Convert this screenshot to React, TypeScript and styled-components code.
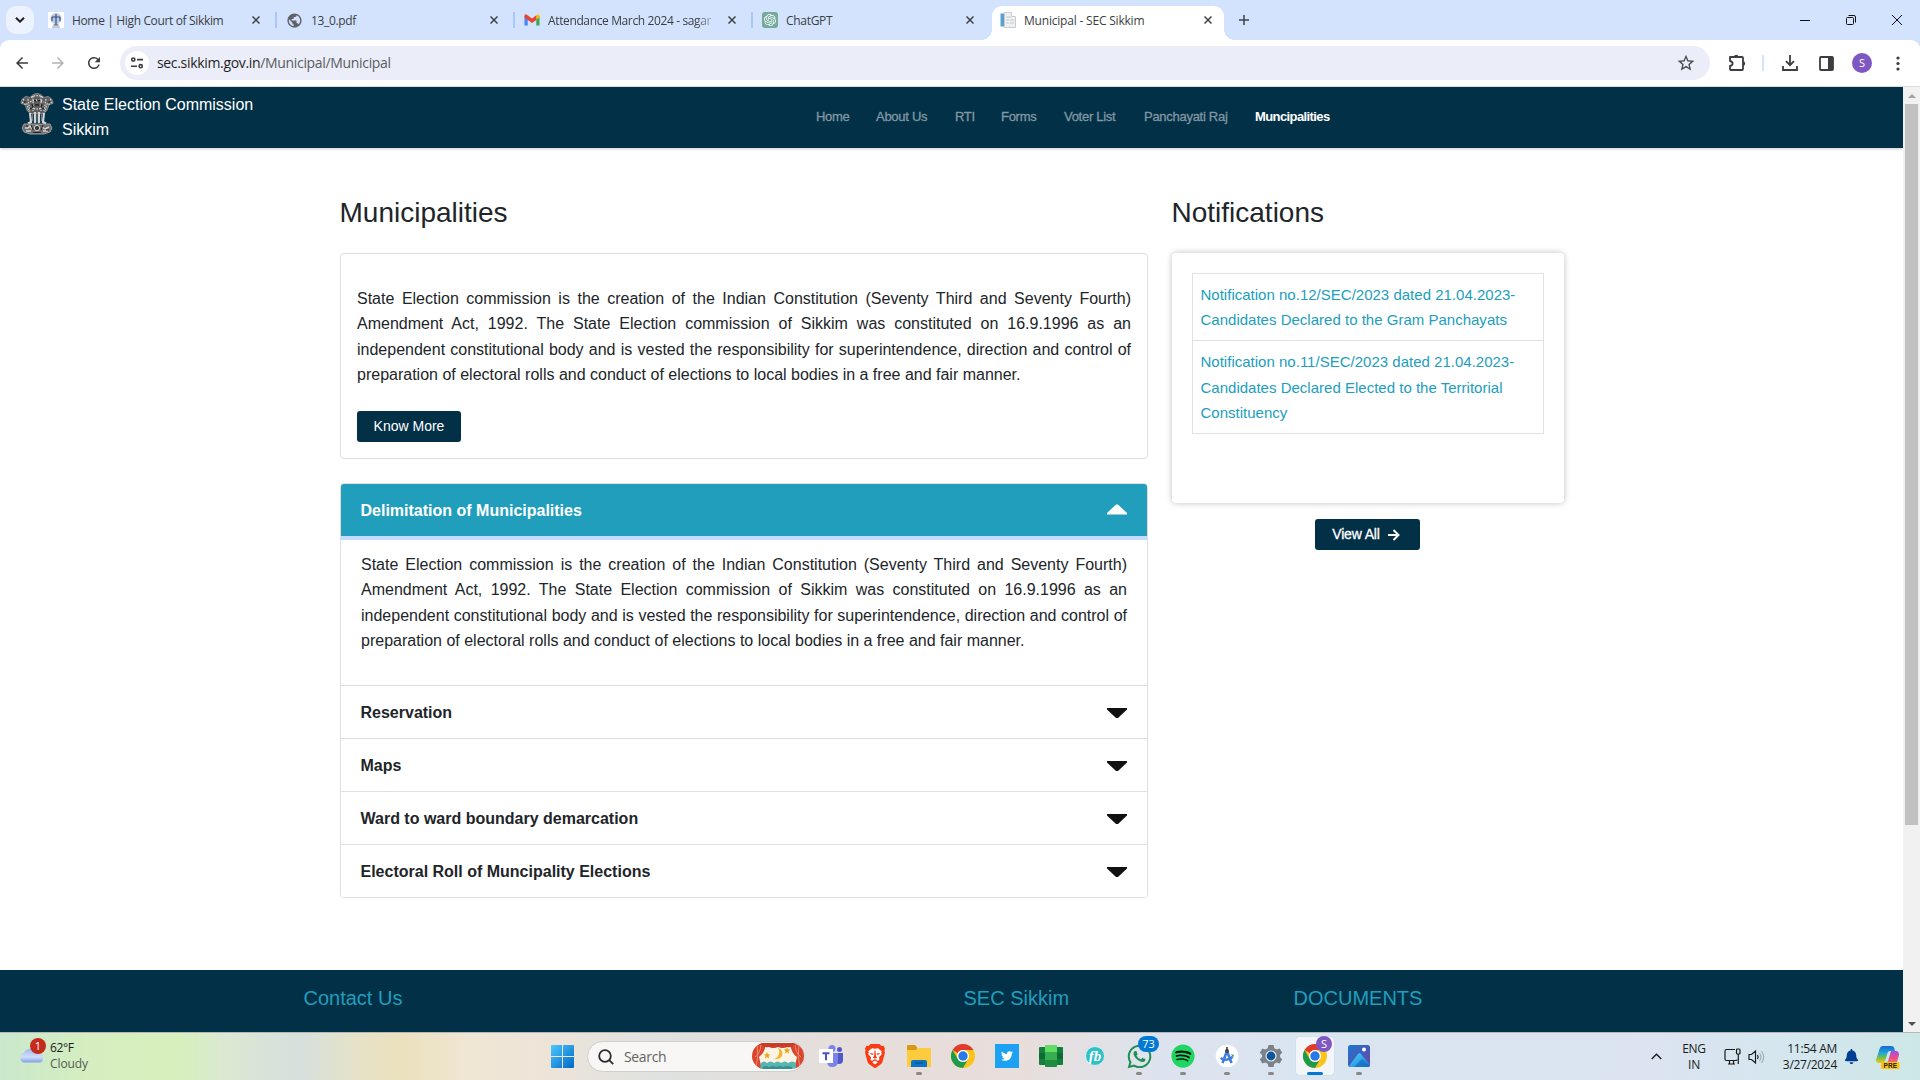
import React from "react";
import styled, { createGlobalStyle } from "styled-components";
import { FaTwitter, FaWhatsapp, FaSpotify, FaBell } from "react-icons/fa";
import { SiOpenai } from "react-icons/si";
import { MdStarOutline, MdArrowBack, MdArrowForward, MdRefresh, MdPublic } from "react-icons/md";

const ui = `"Open Sans", "Noto Sans", sans-serif`;
const arial = `"Liberation Sans", Arial, sans-serif`;
const navy = "#023047";
const teal = "#219ebc";

const Global = createGlobalStyle`
  * { box-sizing: border-box; }
  html, body { margin: 0; padding: 0; }
  body { width: 1920px; height: 1080px; overflow: hidden; background: #fff; font-family: ${arial}; }
  svg { display: block; flex: none; }
  p, h1, h2, h3, h4 { margin: 0; font-weight: 400; }
`;

const Screen = styled.div`
  width: 1920px;
  height: 1080px;
  display: flex;
  flex-direction: column;
`;

/* ---------- browser chrome ---------- */
const TabStrip = styled.div`
  height: 40px;
  background: #d3e3fd;
  display: flex;
  padding-left: 6px;
  font-family: ${ui};
`;
const TabSearch = styled.div`
  width: 28px;
  height: 28px;
  margin: 6px 6px 0 0;
  border-radius: 10px;
  background: #ecf3fe;
  display: grid;
  place-items: center;
`;
const Tab = styled.div<{ $active?: boolean }>`
  position: relative;
  width: ${(p) => (p.$active ? 232 : 238)}px;
  height: ${(p) => (p.$active ? 34 : 28)}px;
  margin-top: 6px;
  padding: ${(p) => (p.$active ? "6px 8px 0" : "6px 14px 0 8px")};
  display: flex;
  align-items: flex-start;
  gap: 8px;
  background: ${(p) => (p.$active ? "#fff" : "transparent")};
  border-radius: 10px 10px 0 0;
  ${(p) =>
    p.$active &&
    `&::before, &::after {
      content: ""; position: absolute; bottom: 0; width: 10px; height: 10px;
    }
    &::before { left: -10px; background: radial-gradient(circle at 0 0, transparent 9.5px, #fff 10px); }
    &::after { right: -10px; background: radial-gradient(circle at 100% 0, transparent 9.5px, #fff 10px); }`}
`;
const TabLine = styled.div`
  position: absolute;
  right: 1px;
  top: 6px;
  width: 2px;
  height: 16px;
  background: #a8c7fa;
`;
const TabTitle = styled.div<{ $ls?: number; $fade?: boolean }>`
  flex: 1;
  height: 18px;
  line-height: 18px;
  font-size: 12px;
  color: #3b3e43;
  letter-spacing: ${(p) => p.$ls ?? -0.35}px;
  white-space: nowrap;
  ${(p) => p.$fade && "mask-image: linear-gradient(90deg, #000 88%, rgba(0,0,0,.1));"}
`;
const TabClose = styled.div`
  width: 16px;
  height: 16px;
  display: grid;
  place-items: center;
`;
const NewTab = styled.div`
  width: 40px;
  height: 40px;
  display: grid;
  place-items: center;
`;
const WinControls = styled.div`
  margin-left: auto;
  display: flex;
`;
const WinButton = styled.div`
  width: 46px;
  height: 40px;
  display: grid;
  place-items: center;
`;
const ToolbarBack = styled.div`
  background: #d3e3fd;
`;
const Toolbar = styled.div`
  height: 47px;
  border-radius: 9px 9px 0 0;
  border-bottom: 1px solid #dadce0;
  background: #fff;
  display: flex;
  align-items: center;
  padding: 0 4px;
  color: #47484a;
`;
const ToolButton = styled.div<{ $dim?: boolean }>`
  width: 36px;
  height: 36px;
  display: grid;
  place-items: center;
  color: ${(p) => (p.$dim ? "#b1b2b4" : "#3c3d40")};
`;
const Omnibox = styled.div`
  width: 1590px;
  height: 34px;
  margin-left: 8px;
  margin-right: 9px;
  border-radius: 17px;
  background: #ebeef8;
  display: flex;
  align-items: center;
  padding: 0 12px 0 5px;
`;
const SiteInfo = styled.div`
  width: 24px;
  height: 24px;
  border-radius: 50%;
  background: #fff;
  display: grid;
  place-items: center;
`;
const Url = styled.div`
  flex: 1;
  margin-left: 8px;
  font: 14px/20px ${ui};
  letter-spacing: -0.33px;
  color: #5a5c61;
  b { font-weight: 400; color: #1f1f1f; }
`;
const ToolLine = styled.div`
  width: 2px;
  height: 16px;
  margin: 0 8px 0 7px;
  background: #d3e3fd;
`;
const Avatar = styled.div`
  width: 20px;
  height: 20px;
  border-radius: 50%;
  background: #7e57c2;
  color: #fff;
  font: 11px/20px ${ui};
  text-align: center;
`;

/* ---------- page ---------- */
const Viewport = styled.div`
  height: 945px;
  display: flex;
`;
const Page = styled.div`
  width: 1903px;
  height: 945px;
  background: #fff;
  overflow: hidden;
  display: flex;
  flex-direction: column;
`;
const Nav = styled.header`
  height: 61px;
  flex: none;
  background: ${navy};
  box-shadow: 0 1px 3px rgba(0, 0, 0, 0.2);
  display: flex;
  padding: 6px 0 0 20px;
`;
const Brand = styled.div`
  width: 754px;
  margin-left: 8px;
  margin-top: -1px;
  color: #fff;
  font-size: 16px;
  line-height: 25px;
`;
const NavLinks = styled.nav`
  display: flex;
  gap: 26px;
  padding-top: 15px;
`;
const NavLink = styled.a<{ $active?: boolean; $w: number }>`
  width: ${(p) => p.$w}px;
  white-space: nowrap;
  font-size: 13px;
  line-height: 18px;
  letter-spacing: ${(p) => (p.$active ? -0.6 : -0.28)}px;
  font-weight: ${(p) => (p.$active ? 700 : 400)};
  color: ${(p) => (p.$active ? "#fff" : "#8197a2")};
  -webkit-text-stroke: ${(p) => (p.$active ? "0" : "0.3px #8197a2")};
`;
const Content = styled.main`
  flex: 1;
  display: flex;
  gap: 24px;
  padding: 47px 0 0 340px;
`;
const Left = styled.section`
  width: 808px;
`;
const Right = styled.aside`
  width: 392px;
  display: flex;
  flex-direction: column;
`;
const Heading = styled.h3`
  height: 58px;
  padding-top: 1px;
  font-size: 28px;
  line-height: 34px;
  text-indent: -0.5px;
  color: #212529;
`;
const Intro = styled.div`
  height: 206px;
  border: 1px solid #dfdfdf;
  border-radius: 4px;
  padding: 32px 16px 0;
`;
const Para = styled.p`
  font-size: 16px;
  line-height: 25.4px;
  color: #212529;
  text-align: justify;
`;
const Button = styled.button<{ $w: number; $bold?: boolean }>`
  width: ${(p) => p.$w}px;
  height: 31px;
  border: 0;
  border-radius: 3px;
  background: ${navy};
  color: #fff;
  font: 14px/21px ${arial};
  letter-spacing: ${(p) => (p.$bold ? -0.15 : 0)}px;
  -webkit-text-stroke: ${(p) => (p.$bold ? "0.3px #fff" : "0")};
  display: flex;
  align-items: center;
  justify-content: center;
  gap: 8px;
  padding: ${(p) => (p.$bold ? "0 3px 0 0" : "0")};
`;
const IntroAction = styled.div`
  padding-top: 23px;
`;
const Accordion = styled.div`
  margin-top: 24px;
  border: 1px solid #dfdfdf;
  border-radius: 4px;
  overflow: hidden;
`;
const AccHead = styled.div<{ $open?: boolean }>`
  height: ${(p) => (p.$open ? 52 : 53)}px;
  border-top: ${(p) => (p.$open ? "0" : "1px solid #dfdfdf")};
  background: ${(p) => (p.$open ? teal : "#fff")};
  color: ${(p) => (p.$open ? "#fff" : "#212529")};
  padding: 0 20px 0 19.5px;
  display: flex;
  align-items: center;
  justify-content: space-between;
  font-size: 16px;
  font-weight: 700;
  span { padding-top: 2px; }
`;
const AccBody = styled.div`
  height: 149px;
  border-top: 4px solid #c2dbfe;
  padding: 12px 20px 0;
`;
const NoticeCard = styled.div`
  height: 250px;
  border-radius: 4px;
  background: #fff;
  box-shadow: 0 0 6px rgba(0, 0, 0, 0.25);
  padding: 20px;
`;
const NoticeList = styled.div`
  border: 1px solid #dee2e6;
`;
const Notice = styled.a`
  display: block;
  padding: 8px 7.5px;
  font-size: 15px;
  line-height: 25.2px;
  letter-spacing: 0.01px;
  color: ${teal};
  & + & { border-top: 1px solid #dee2e6; }
`;
const ViewAll = styled.div`
  padding: 16px 0 0 143px;
`;
const Footer = styled.footer`
  height: 62px;
  flex: none;
  background: ${navy};
  color: ${teal};
  display: grid;
  grid-template-columns: 660px 330px 330px;
  padding: 15px 0 0 303.5px;
  font-size: 20px;
  line-height: 26px;
`;
const Scroll = styled.div`
  width: 17px;
  background: #f1f1f1;
  display: flex;
  flex-direction: column;
  align-items: center;
`;
const ScrollArrow = styled.div`
  height: 17px;
  width: 17px;
  display: grid;
  place-items: center;
`;
const Thumb = styled.div`
  width: 13px;
  height: 721px;
  margin-bottom: auto;
  background: #c1c1c1;
`;

/* ---------- taskbar ---------- */
const Taskbar = styled.div`
  height: 48px;
  border-top: 1px solid #b4b8b8;
  display: flex;
  font-family: ${ui};
  background: linear-gradient(90deg, #c9e8cc 0, #d6eebf 90px, #d6efbc 180px, #dbe8d2 225px, #d5e0dd 300px, #e3e2cb 345px, #ebe1bd 400px, #f0e6d4 470px, #eee4d8 540px, #dfe2e0 660px, #e2e0de 740px, #e6dedb 860px, #e8dedb 1020px, #dde3ee 1160px, #dae5f2 1300px, #dbe4f0 1660px, #d5e6ef 1780px, #cde7e6 1920px);
`;
const Weather = styled.div`
  width: 540px;
  padding: 6px 0 0 17px;
  display: flex;
  gap: 6px;
`;
const WeatherText = styled.div`
  padding-top: 1px;
  font-size: 12px;
  line-height: 16px;
  letter-spacing: -0.4px;
  color: #1b1b1b;
  span { color: #565a55; letter-spacing: -0.1px; }
`;
const TaskApp = styled.div<{ $on?: boolean }>`
  position: relative;
  width: 38px;
  height: 38px;
  margin: 4px 3px 0;
  border-radius: 4px;
  background: ${(p) => (p.$on ? "rgba(255,255,255,.65)" : "transparent")};
  box-shadow: ${(p) => (p.$on ? "0 0 1px rgba(0,0,0,.2)" : "none")};
  display: grid;
  place-items: center;
`;
const Dot = styled.i<{ $on?: boolean }>`
  position: absolute;
  bottom: 0;
  left: ${(p) => (p.$on ? 11 : 16)}px;
  width: ${(p) => (p.$on ? 16 : 6)}px;
  height: 3px;
  border-radius: 2px;
  background: ${(p) => (p.$on ? "#0078d4" : "#8a8785")};
`;
const Badge = styled.span<{ $c: string; $w: number; $x: number; $y: number; $h: number }>`
  position: absolute;
  left: ${(p) => p.$x}px;
  top: ${(p) => p.$y}px;
  width: ${(p) => p.$w}px;
  height: ${(p) => p.$h}px;
  border-radius: 9px;
  background: ${(p) => p.$c};
  color: #fff;
  font: 11px/${(p) => p.$h}px ${ui};
  text-align: center;
`;
const WeatherIcon = styled.div`
  position: relative;
  width: 27px;
  padding: 8px 0 0 2px;
`;
const Search = styled.div`
  width: 218px;
  height: 31px;
  margin: 8px 4px 0 3px;
  border-radius: 16px;
  border: 1px solid #d0cfcb;
  background: #f8f7f5;
  display: flex;
  align-items: center;
  padding: 0 0 0 10px;
`;
const SearchText = styled.div`
  flex: 1;
  margin-left: 10px;
  font-size: 14px;
  letter-spacing: -0.35px;
  color: #65635f;
`;
const Tray = styled.div`
  margin-left: auto;
  width: 277px;
  height: 47px;
  display: flex;
  align-items: center;
  color: #1b1b1b;
  font-size: 12px;
  line-height: 16px;
`;
const Lang = styled.div`
  width: 32px;
  margin-left: 9px;
  text-align: center;
  letter-spacing: -0.3px;
`;
const Clock = styled.div`
  width: 64px;
  white-space: nowrap;
  letter-spacing: -0.3px;
  display: flex;
  flex-direction: column;
  align-items: flex-end;
`;
const Gap = styled.div<{ $w: number }>`
  width: ${(p) => p.$w}px;
  flex: none;
`;

const Cross = () => (
  <svg width="8" height="8" viewBox="0 0 8 8" stroke="#3f4145" strokeWidth="1.5"><path d="M.5.5l7 7M7.5.5l-7 7" /></svg>
);

const Emblem = () => (
  <svg width="34" height="42" viewBox="0 0 34 42" fill="none" stroke="#d4d4d4">
    <path fill="#5e5e5e" stroke="#999" strokeWidth=".8" d="M12 2.500q5-4 10 0l2 2 4-1q5 2 5 7l-4 1-2 6-4 3H11l-4-3-2-6-4-1Q1 5.500 6 3.500l4 1z" />
    <path strokeWidth="1.300" strokeDasharray="1.600 1.200" d="M11 4.500q6-4 12 0M10 9q7-4 14 0M11 14q6 4 12 0M3 6l4 5 2 8M31 6l-4 5-2 8M13 3v15M21 3v15M8 6l2 12M26 6l-2 12M2 9l4 3M32 9l-4 3" />
    <path stroke="#222" strokeWidth="1.300" d="M14 7.500h2M18 7.500h2M15 12h4M4 9h2M28 9h2M10 16l3-2M24 16l-3-2M12 11l1 3M22 11l-1 3" />
    <path strokeWidth="2.200" d="M10 20l1 9-3 1.500M15 19v11M19 19v11M24 20l-1 9 3 1.500" />
    <path stroke="#777" strokeWidth="1" d="M12.500 20v8M21.500 20v8M17 20v9" />
    <path fill="#6e6e6e" stroke="#b0b0b0" strokeWidth=".8" d="M4 31h26l2 4-2 4-6 2H10l-6-2-2-4z" />
    <circle cx="17" cy="35" r="2.600" fill="#333" />
    <path strokeWidth="1.500" d="M5 35h3l2-2 2 3M22 34l3 2 4-2M6 38h5M23 38h5" />
    <path stroke="#222" d="M11 32l2 5M23 32l-2 5M6 33h2M26 37h3M13 39.500h8" />
  </svg>
);

const Chrome = () => (
  <svg width="24" height="24" viewBox="0 0 24 24">
    <circle cx="12" cy="12" r="12" fill="#fcc419" />
    <path d="M1.600 6A12 12 0 0 1 22.400 6H12a6 6 0 0 0-5.200 3z" fill="#e03b2e" />
    <path d="M1.600 6A12 12 0 0 0 12 24l5.200-9A6 6 0 0 1 6.800 15z" fill="#1f9a4c" />
    <circle cx="12" cy="12" r="6" fill="#fff" />
    <circle cx="12" cy="12" r="4.700" fill="#2878eb" />
  </svg>
);

const Caret = ({ up }: { up?: boolean }) => (
  <svg width="20" height="20" viewBox="0 0 20 20">
    {up ? <path d="M0 14.500V13L9 4.500h2L20 13v1.500z" fill="#fff" /> : <path d="M0 6V7.500l9 8.500h2L20 7.500V6z" fill="#111" />}
  </svg>
);

const text =
  "State Election commission is the creation of the Indian Constitution (Seventy Third and Seventy Fourth) Amendment Act, 1992. The State Election commission of Sikkim was constituted on 16.9.1996 as an independent constitutional body and is vested the responsibility for superintendence, direction and control of preparation of electoral rolls and conduct of elections to local bodies in a free and fair manner.";

export default function App() {
  return (
    <Screen>
      <Global />
      <TabStrip>
        <TabSearch>
          <svg width="10" height="6" viewBox="0 0 10 6" fill="none" stroke="#1f1f1f" strokeWidth="2"><path d="M1 .7l4 4 4-4" /></svg>
        </TabSearch>
        <Tab>
          <svg width="16" height="16" viewBox="0 0 16 16">
            <path fill="#fff" d="M0 0h16v16H0z" />
            <circle cx="8" cy="6.500" r="5.500" fill="#b9cbdf" />
            <path d="M8 2v11M4 5h8M4 5v4M12 5v4M5.500 13h5" stroke="#3c4a86" strokeWidth="1.200" />
            <path d="M4 15h8" stroke="#8c93b3" />
          </svg>
          <TabTitle>Home | High Court of Sikkim</TabTitle>
          <TabClose><Cross /></TabClose>
          <TabLine />
        </Tab>
        <Tab>
          <MdPublic size={17} color="#5f6368" />
          <TabTitle>13_0.pdf</TabTitle>
          <TabClose><Cross /></TabClose>
          <TabLine />
        </Tab>
        <Tab>
          <svg width="16" height="16" viewBox="0 0 16 16">
            <path d="M.5 4v9.500h3.200V6z" fill="#4285f4" /><path d="M15.500 4v9.500h-3.200V6z" fill="#34a853" />
            <path d="M12.300 3.200l2-1q1.200 0 1.200 1.800v1.500l-3.200 2.400z" fill="#fbbc04" />
            <path d="M.5 4q0-2.300 2-1.600L8 6.500l4.300-3.300v4.700L8 11 .5 5.500z" fill="#ea4335" />
          </svg>
          <TabTitle $fade $ls={-0.37}>Attendance March 2024 - sagar</TabTitle>
          <TabClose><Cross /></TabClose>
          <TabLine />
        </Tab>
        <Tab>
          <svg width="16" height="16" viewBox="0 0 16 16"><rect width="16" height="16" rx="3" fill="#74aa9c" /><SiOpenai x="2" y="2" width="12" height="12" size={12} color="#fff" /></svg>
          <TabTitle $ls={-0.3}>ChatGPT</TabTitle>
          <TabClose><Cross /></TabClose>
        </Tab>
        <Tab $active>
          <svg width="16" height="16" viewBox="0 0 16 16">
            <path d="M4.500.5h7v4h4v11h-11z" fill="#eef0f2" stroke="#c8ccd0" />
            <path d="M.5 1.500h3.500v13H.5z" fill="#5aa0cf" /><path d="M6 5h5M6 8h3M10 8h4M6 11h3M10 11h4" stroke="#c2c7cc" />
          </svg>
          <TabTitle $ls={-0.2}>Municipal - SEC Sikkim</TabTitle>
          <TabClose><Cross /></TabClose>
        </Tab>
        <NewTab>
          <svg width="10" height="10" viewBox="0 0 10 10" stroke="#3f4145" strokeWidth="1.500"><path d="M5 0v10M0 5h10" /></svg>
        </NewTab>
        <WinControls>
          <WinButton><svg width="10" height="10" viewBox="0 0 10 10"><path d="M0 5.500h10" stroke="#111" /></svg></WinButton>
          <WinButton>
            <svg width="10" height="10" viewBox="0 0 10 10" fill="none" stroke="#111"><rect x=".5" y="2.500" width="7" height="7" rx="1" /><path d="M2.500.5H8Q9.500.5 9.500 2v5.500" /></svg>
          </WinButton>
          <WinButton><svg width="10" height="10" viewBox="0 0 10 10" stroke="#111"><path d="M0 0l10 10M10 0L0 10" /></svg></WinButton>
        </WinControls>
      </TabStrip>
      <ToolbarBack>
        <Toolbar>
          <ToolButton><MdArrowBack size={18} /></ToolButton>
          <ToolButton $dim><MdArrowForward size={18} /></ToolButton>
          <ToolButton><MdRefresh size={18} /></ToolButton>
          <Omnibox>
            <SiteInfo>
              <svg width="14" height="12" viewBox="0 0 14 12" fill="none" stroke="#3c3d40" strokeWidth="1.600"><circle cx="3.300" cy="2.600" r="1.600" /><path d="M7 2.600h6M1 9.200h6" /><circle cx="10.700" cy="9.200" r="1.600" /></svg>
            </SiteInfo>
            <Url><b>sec.sikkim.gov.in</b>/Municipal/Municipal</Url>
            <MdStarOutline size={20} color="#47484a" />
            <Gap $w={2} />
          </Omnibox>
          <ToolButton>
            <svg width="18" height="18" viewBox="0 0 18 18" fill="none" stroke="currentColor" strokeWidth="1.800">
              <path d="M2 3h12q1 0 1 1v11q0 1-1 1H3q-1 0-1-1v-3q2.600-.6 2.600-2.500T2 7V4z" strokeLinejoin="round" />
              <path d="M6 3a2.200 2.200 0 0 1 4.400 0zM15 7.300a2.200 2.200 0 0 1 0 4.400z" fill="currentColor" stroke="none" />
            </svg>
          </ToolButton>
          <ToolLine />
          <ToolButton>
            <svg width="16" height="16" viewBox="0 0 16 16" fill="none" stroke="currentColor" strokeWidth="1.800"><path d="M8 0v10M4 6.200l4 4 4-4M1 11v4h14v-4" /></svg>
          </ToolButton>
          <ToolButton>
            <svg width="15" height="15" viewBox="0 0 15 15" fill="none" stroke="currentColor" strokeWidth="1.800"><rect x="1" y="1" width="13" height="13" rx="1" /><path d="M9 1h5v13H9z" fill="currentColor" stroke="none" /></svg>
          </ToolButton>
          <ToolButton><Avatar>S</Avatar></ToolButton>
          <ToolButton>
            <svg width="4" height="15" viewBox="0 0 4 15" fill="currentColor"><circle cx="2" cy="2" r="1.600" /><circle cx="2" cy="7.500" r="1.600" /><circle cx="2" cy="13" r="1.600" /></svg>
          </ToolButton>
        </Toolbar>
      </ToolbarBack>

      <Viewport>
        <Page>
          <Nav>
            <Emblem />
            <Brand>State Election Commission<br />Sikkim</Brand>
            <NavLinks>
              <NavLink $w={34}>Home</NavLink>
              <NavLink $w={53}>About Us</NavLink>
              <NavLink $w={20}>RTI</NavLink>
              <NavLink $w={37}>Forms</NavLink>
              <NavLink $w={54}>Voter List</NavLink>
              <NavLink $w={85}>Panchayati Raj</NavLink>
              <NavLink $w={75} $active>Muncipalities</NavLink>
            </NavLinks>
          </Nav>
          <Content>
            <Left>
              <Heading>Municipalities</Heading>
              <Intro>
                <Para>{text}</Para>
                <IntroAction><Button $w={104}>Know More</Button></IntroAction>
              </Intro>
              <Accordion>
                <AccHead $open><span>Delimitation of Municipalities</span><Caret up /></AccHead>
                <AccBody><Para>{text}</Para></AccBody>
                {["Reservation", "Maps", "Ward to ward boundary demarcation", "Electoral Roll of Muncipality Elections"].map((t) => (
                  <AccHead key={t}><span>{t}</span><Caret /></AccHead>
                ))}
              </Accordion>
            </Left>
            <Right>
              <Heading>Notifications</Heading>
              <NoticeCard>
                <NoticeList>
                  <Notice>Notification no.12/SEC/2023 dated 21.04.2023-<br />Candidates Declared to the Gram Panchayats</Notice>
                  <Notice>Notification no.11/SEC/2023 dated 21.04.2023-<br />Candidates Declared Elected to the Territorial<br />Constituency</Notice>
                </NoticeList>
              </NoticeCard>
              <ViewAll>
                <Button $w={105} $bold>
                  View All
                  <svg width="12" height="12" viewBox="0 0 12 12" fill="none" stroke="#fff" strokeWidth="2"><path d="M0 6h10M5.500 1l5 5-5 5" /></svg>
                </Button>
              </ViewAll>
            </Right>
          </Content>
          <Footer><div>Contact Us</div><div>SEC Sikkim</div><div>DOCUMENTS</div></Footer>
        </Page>
        <Scroll>
          <ScrollArrow><svg width="8" height="4" viewBox="0 0 8 4"><path d="M0 4l4-4 4 4z" fill="#a3a3a3" /></svg></ScrollArrow>
          <Thumb />
          <ScrollArrow><svg width="8" height="4" viewBox="0 0 8 4"><path d="M0 0l4 4 4-4z" fill="#505050" /></svg></ScrollArrow>
        </Scroll>
      </Viewport>

      <Taskbar>
        <Weather>
          <WeatherIcon>
            <svg width="24" height="16" viewBox="0 0 24 16">
              <defs><linearGradient id="cl" x2="0" y2="1"><stop stopColor="#9fb8ee" /><stop offset=".6" stopColor="#cfdefa" /><stop offset="1" stopColor="#7f9fe6" /></linearGradient></defs>
              <path d="M5 15.500a5 5 0 0 1-.5-9.500A8 8 0 0 1 18 5q6 1 6 6 0 4.500-4 4.500z" fill="url(#cl)" />
            </svg>
            <Badge $c="#c42b1c" $w={16} $h={16} $x={13} $y={-1}>1</Badge>
          </WeatherIcon>
          <WeatherText>62°F<br /><span>Cloudy</span></WeatherText>
        </Weather>
        <TaskApp>
          <svg width="23" height="23" viewBox="0 0 23 23">
            <defs><linearGradient id="wn" x2="1" y2="1"><stop stopColor="#4cc8fb" /><stop offset="1" stopColor="#0067c8" /></linearGradient></defs>
            <path fill="url(#wn)" d="M0 1q0-1 1-1h10v11H0zM12 0h10q1 0 1 1v10H12zM0 12h11v11H1q-1 0-1-1zM12 12h11v10q0 1-1 1H12z" />
          </svg>
        </TaskApp>
        <Search>
          <svg width="16" height="16" viewBox="0 0 16 16" fill="none" stroke="#2b2b2b" strokeWidth="1.800"><circle cx="7" cy="7" r="5.800" /><path d="M11.200 11.200l4 4" /></svg>
          <SearchText>Search</SearchText>
          <svg width="52" height="27" viewBox="0 0 52 27">
            <defs><clipPath id="pill"><rect width="52" height="26" rx="13" /></clipPath></defs>
            <g clipPath="url(#pill)">
              <path fill="#fbf3e4" d="M0 0h52v27H0z" />
              <path fill="#d9452f" d="M0 0h14q-1 10-7 14l3 13H0zM52 0H38q1 10 7 14l-3 13h10z" />
              <path fill="#c93a28" d="M8 0h36q-3 5-9 4-4 2-9 0-5 2-9 0-6 1-9-4z" />
              <path stroke="#f08a6c" fill="none" d="M5 0q2 12-1 26M9 2q-1 9-6 12M47 0q-2 12 1 26M43 2q1 9 6 12" />
              <path fill="#58b6b0" d="M9 20q3-3 6 0 4-3 7 0 4-3 7 0 4-3 7 0 4-3 8 0v7H8z" />
              <path fill="#3a8f91" d="M11 24q3-2 6 0 4-2 7 0 4-2 7 0 4-2 9 0v3H10z" />
              <path fill="#efb732" d="M26 5q6 2 4 8-3 4-8 3 4-1 5-5 1-3-1-6z" />
              <path fill="#e9a820" d="M15 9l1 2.200 2.300.3-1.700 1.600.5 2.400-2.100-1.200-2.100 1.200.5-2.400-1.700-1.600 2.300-.3zM35 4l1 2.200 2.300.3-1.700 1.600.5 2.400-2.100-1.200-2.100 1.200.5-2.400-1.700-1.600 2.300-.3z" />
            </g>
          </svg>
        </Search>
        <TaskApp>
          <svg width="24" height="22" viewBox="0 0 24 22">
            <circle cx="13" cy="3.500" r="3.500" fill="#7b83eb" /><circle cx="20.500" cy="4.500" r="2.500" fill="#5059c9" />
            <path d="M16 8h8v7q0 4-4 4-4 0-4-4z" fill="#5059c9" /><path d="M8 8h11v8q0 6-6 6-5 0-5-6z" fill="#7b83eb" />
            <path d="M0 4h14v14H0z" fill="#fff" /><path d="M3.500 7.200h7v2H8v6H6v-6H3.500z" fill="#4b53bc" />
          </svg>
        </TaskApp>
        <TaskApp>
          <svg width="20" height="24" viewBox="0 0 20 24">
            <path fill="#fb3b14" d="M5.500 0h9l2 2 2-.2L20 4.500l-.6 2L20 8.500l-2.600 9.500q-.5 1.500-1.600 2.300L10.800 23.700q-.8.500-1.600 0l-5-3.400Q3.100 19.500 2.600 18L0 8.500l.6-2L0 4.500 1.500 1.800l2 .2z" />
            <path fill="#fff" d="M7 4.200l3 .6 3-.6 3.700 3-.5 1.300.7 1.500-3 3.500.6 2-1.500 1.500-2.500-1.700h-1L7 17l-1.500-1.500.6-2-3-3.500.7-1.500-.5-1.300zM10 16.500l2.800 1.700L10 20.500l-2.800-2.300z" />
            <path fill="#fb3b14" d="M5 9l3.500.5-.3 1.200-2.200-.3zM15 9l-3.500.5.300 1.200 2.200-.3zM9.500 6.500h1l.4 5.500 1.300 1.500-2.200 1.300-2.200-1.300L9.100 12z" />
          </svg>
        </TaskApp>
        <TaskApp>
          <svg width="24" height="22" viewBox="0 0 24 22">
            <path d="M0 1q0-1 1-1h7l2 2v4H0z" fill="#d99a13" /><path d="M0 5h9l2-2h12q1 0 1 1v17q0 1-1 1H1q-1 0-1-1z" fill="#fdcb3e" />
            <path d="M4 22v-5q0-2 2-2h12q2 0 2 2v5z" fill="#0b72c4" /><path d="M8 18h8" stroke="#084f8c" />
          </svg>
          <Dot />
        </TaskApp>
        <TaskApp><Chrome /></TaskApp>
        <TaskApp>
          <svg width="24" height="24" viewBox="0 0 24 24"><path fill="#1da1f2" d="M0 0h24v24H0z" /><FaTwitter x="6" y="6" size={12} color="#fff" /></svg>
        </TaskApp>
        <TaskApp>
          <svg width="24" height="22" viewBox="0 0 24 22">
            <rect y="2" width="24" height="18" rx="1" fill="#12803a" /><path d="M0 8h6v6H0zM18 8h6v6h-6z" fill="#0d6b33" />
            <rect x="6" width="12" height="22" rx="1.500" fill="#36ad4e" /><path d="M6 1.500Q6 0 7.500 0h9Q18 0 18 1.500V7H6z" fill="#62dc62" /><path d="M6 15h12v5.500q0 1.500-1.500 1.500h-9Q6 22 6 20.500z" fill="#1f8c3f" />
          </svg>
        </TaskApp>
        <TaskApp>
          <svg width="20" height="20" viewBox="0 0 20 20"><circle cx="10" cy="10" r="9.500" fill="#2fc0c8" stroke="#d8f1f2" /><text x="10" y="14.800" textAnchor="middle" fontFamily="Liberation Serif" fontStyle="italic" fontWeight="700" fontSize="15" fill="#fff">fb</text></svg>
        </TaskApp>
        <TaskApp><FaWhatsapp size={27} color="#1c8f55" /><Badge $c="#0078d4" $w={21} $h={16} $x={18} $y={-1}>73</Badge><Dot /></TaskApp>
        <TaskApp>
          <svg width="24" height="24" viewBox="0 0 24 24"><circle cx="12" cy="12" r="9" fill="#111" /><FaSpotify size={24} color="#1ed760" /></svg>
          <Dot />
        </TaskApp>
        <TaskApp>
          <svg width="24" height="24" viewBox="0 0 24 24"><circle cx="12" cy="12" r="11.300" fill="#fff" />
            <path d="M12 7L7.500 19M12 7l4.500 12" stroke="#3f7de0" strokeWidth="2.600" fill="none" /><path d="M5.500 14q6.500 4 12-1" stroke="#3f7de0" strokeWidth="2.400" fill="none" /><path d="M16 10l3 1-1 3z" fill="#3ba55c" /><circle cx="12" cy="7" r="2" fill="#444" /><path d="M12 3v3" stroke="#333" strokeWidth="1.500" />
          </svg>
          <Dot />
        </TaskApp>
        <TaskApp>
          <svg width="24" height="24" viewBox="0 0 24 24">
            <path fill="#7b8289" d="M9.500 1h5l.8 3.200 2.200 1.200 3.200-1 2.500 4.300L21 11v2l2.200 2.300-2.500 4.300-3.200-1-2.200 1.200-.8 3.200h-5l-.8-3.200-2.200-1.200-3.200 1-2.500-4.300L3 13v-2L.8 8.700l2.500-4.300 3.200 1 2.200-1.200z" />
            <circle cx="12" cy="12" r="5.500" fill="#eceef0" /><circle cx="12" cy="12" r="4.400" fill="#0b569c" />
          </svg>
          <Dot />
        </TaskApp>
        <TaskApp $on><Chrome /><Badge $c="#7e57c2" $w={16} $h={16} $x={20} $y={-1}>S</Badge><Dot $on /></TaskApp>
        <TaskApp>
          <svg width="22" height="22" viewBox="0 0 22 22">
            <defs><linearGradient id="ph" x2="1" y2="1"><stop stopColor="#1c78cf" /><stop offset="1" stopColor="#6d43a6" /></linearGradient><linearGradient id="ph2" x2="1" y2="1"><stop stopColor="#51d6fa" /><stop offset="1" stopColor="#1478d8" /></linearGradient></defs>
            <rect width="22" height="22" rx="2.500" fill="url(#ph)" /><path d="M1 21L10 9q1.500-2 3 0l9 11q-1 2-2.500 2h-17Q1.500 22 1 21z" fill="url(#ph2)" /><path d="M6 22l8-8 8 7-2 1z" fill="#1266bd" opacity=".6" /><circle cx="16" cy="4.500" r="2" fill="#fff" />
          </svg>
          <Dot />
        </TaskApp>
        <Tray>
          <Gap $w={8} />
          <svg width="11" height="7" viewBox="0 0 11 7" fill="none" stroke="#1b1b1b" strokeWidth="1.300"><path d="M.7 6l4.800-4.800L10.300 6" /></svg>
          <Gap $w={7} />
          <Lang>ENG<br />IN</Lang>
          <Gap $w={14} />
          <svg width="17" height="17" viewBox="0 0 17 17" fill="none" stroke="#1b1b1b" strokeWidth="1.200"><path d="M11 1.500H2.500q-1.500 0-1.500 1.500v8q0 1.500 1.500 1.500h9q1.500 0 1.500-1M4 16h7M5.500 13v3M9.500 13v3" /><rect x="12.500" y="1" width="3.500" height="5" rx="1" /><path d="M14.300 6v10" /></svg>
          <Gap $w={7} />
          <svg width="17" height="16" viewBox="0 0 17 16" fill="none" stroke="#1b1b1b" strokeWidth="1.200"><path d="M1 5.500h2.500L7.500 2v12l-4-3.500H1zM9.500 6q1.300 2 0 4" /><path stroke="#a4afb8" d="M11.500 4q2.800 4 0 8M13.500 2q4.400 6 0 12" /></svg>
          <Gap $w={8} />
          <Clock><span>11:54 AM</span><span>3/27/2024</span></Clock>
          <Gap $w={7} />
          <FaBell size={15} color="#003e92" />
          <Gap $w={17} />
          <svg width="24" height="24" viewBox="0 0 24 24">
            <defs><linearGradient id="ca" x2="0" y2="1"><stop stopColor="#1767d2" /><stop offset=".4" stopColor="#1fa5d8" /><stop offset=".7" stopColor="#7bc043" /><stop offset="1" stopColor="#f5c518" /></linearGradient><linearGradient id="cb" x2="0" y2="1"><stop stopColor="#a24fe0" /><stop offset=".5" stopColor="#ea4f8b" /><stop offset="1" stopColor="#f78a3a" /></linearGradient></defs>
            <path d="M7 1h8q3 0 3.500 3l.5 2h-5q-2 0-2.500 2l-2 7q-1 3-4 3H3q-3 0-3-3L3.500 4Q4.500 1 7 1z" fill="url(#ca)" />
            <path d="M15 6h5q3 0 3 4l-2 7q-1 3-4 3H9l3-4z" fill="url(#cb)" />
            <rect x="5" y="17" width="18.500" height="7" rx="1.500" fill="#ffc20a" />
            <text x="14.300" y="22.900" textAnchor="middle" fontFamily="Liberation Sans" fontWeight="700" fontSize="6.500" fill="#222">PRE</text>
          </svg>
        </Tray>
      </Taskbar>
    </Screen>
  );
}
